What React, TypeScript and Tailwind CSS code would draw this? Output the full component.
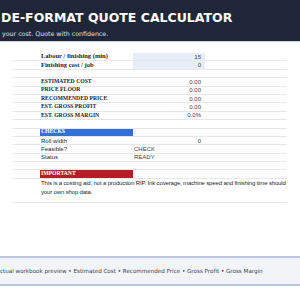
import React from "react";

type Row = {
    label?: string;
    value?: string;
    bold?: boolean;
    caps?: boolean;
    input?: boolean;
    band?: "blue" | "red";
    left?: boolean;
};

const rows: Row[] = [
    { label: "Labour / finishing (min)", value: "15", bold: true, input: true },
    { label: "Finishing cost / job", value: "0", bold: true, input: true },
    {},
    { label: "ESTIMATED COST", value: "0.00", bold: true, caps: true },
    { label: "PRICE FLOOR", value: "0.00", bold: true, caps: true },
    { label: "RECOMMENDED PRICE", value: "0.00", bold: true, caps: true },
    { label: "EST. GROSS PROFIT", value: "0.00", bold: true, caps: true },
    { label: "EST. GROSS MARGIN", value: "0.0%", bold: true, caps: true },
    {},
    { label: "CHECKS", band: "blue", caps: true },
    { label: "Roll width", value: "0" },
    { label: "Feasible?", value: "CHECK", left: true },
    { label: "Status", value: "READY", left: true },
    {},
    { label: "IMPORTANT", band: "red", caps: true },
];

const serif = { fontFamily: "'Liberation Serif', serif" };
const sans = { fontFamily: "'Liberation Sans', sans-serif" };

function SheetRow({ row }: { row: Row }) {
    const serifCell = row.bold || row.band;
    return (
        <div className="flex h-[8.4px] border-b border-[#e6e8ec] items-stretch">
            <div className="w-[28px] shrink-0" />
            <div
                className={
                    "w-[93px] shrink-0 flex items-center pl-[1px] leading-none whitespace-nowrap " +
                    (row.caps ? "text-[5.7px] " : serifCell ? "text-[6.5px] " : "text-[6px] ") +
                    (row.band === "blue"
                        ? "bg-[#3070d8] text-white font-bold"
                        : row.band === "red"
                        ? "bg-[#b31f24] text-white font-bold"
                        : row.bold
                        ? "font-bold text-[#1f2328]"
                        : "text-[#24282e]")
                }
                style={serifCell ? serif : sans}
            >
                {row.label}
            </div>
            <div
                className={
                    "w-[72px] shrink-0 flex items-center text-[6px] leading-none text-[#3a3f46] whitespace-nowrap " +
                    (row.left ? "justify-start pl-[1px] " : "justify-end pr-[4px] ") +
                    (row.input ? "bg-[#e7edf9]" : "")
                }
                style={sans}
            >
                {row.value}
            </div>
            <div className="flex-1" />
        </div>
    );
}

export default function App() {
    return (
        <div className="w-[300px] h-[300px] bg-white overflow-hidden flex flex-col">
            <header className="h-[42px] shrink-0 bg-[#1f2637] border-b border-[#c9d0de] pt-[11px] pl-[1px]">
                <h1
                    className="text-[12.5px] leading-[14px] font-bold text-white whitespace-nowrap"
                    style={{ fontFamily: "'DejaVu Sans', sans-serif" }}
                >
                    DE-FORMAT QUOTE CALCULATOR
                </h1>
                <p
                    className="mt-[4px] text-[6.3px] leading-[9px] text-[#dfe4ee] whitespace-nowrap pl-[1px]"
                    style={{ fontFamily: "'DejaVu Sans', sans-serif" }}
                >
                    your cost. Quote with confidence.
                </p>
            </header>

            <div className="ml-[12px] w-[275px] mt-[11px] flex flex-col">
                {rows.map((row, i) => (
                    <SheetRow key={i} row={row} />
                ))}
                <div className="h-[24.5px] border-b border-[#e6e8ec] flex">
                    <div className="w-[28px] shrink-0" />
                    <p
                        className="flex-1 pl-[1px] pt-[0.5px] text-[6px] leading-[8.4px] tracking-[-0.15px] text-[#24282e] whitespace-nowrap"
                        style={sans}
                    >
                        This is a costing aid, not a production RIP. Ink coverage, machine speed and finishing time should
                        <br />
                        your own shop data.
                    </p>
                </div>
            </div>

            <div className="mt-[53px] h-[30px] shrink-0 bg-[#f2f4f8] border-y-2 border-[#b9c7e2] flex items-center">
                <p
                    className="text-[5.6px] leading-none text-[#3c4350] whitespace-nowrap"
                    style={{ fontFamily: "'DejaVu Sans', sans-serif" }}
                >
                    ctual workbook preview • Estimated Cost • Recommended Price • Gross Profit • Gross Margin
                </p>
            </div>
        </div>
    );
}
